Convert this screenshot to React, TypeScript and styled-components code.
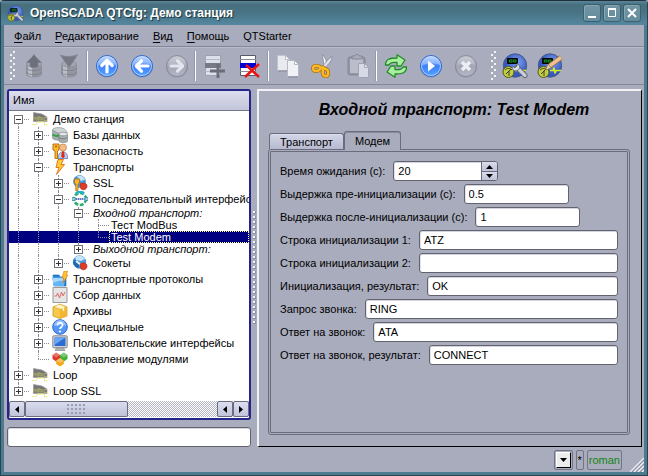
import React, { useState } from "react";
import styled, { createGlobalStyle, css } from "styled-components";

const color = {
  face: "#a9acbd",
  line: "#6b6c7d",
  navy: "#000080",
  frame: "#24248a",
};

const GlobalStyle = createGlobalStyle`
  * { box-sizing: border-box; }
  body { margin: 0; background: ${color.face}; }
  body, button, input { font-family: "Liberation Sans", Arial, sans-serif; font-size: 11px; color: #000; }
  button { margin: 0; padding: 0; border: 0; background: none; }
  input { margin: 0; min-width: 0; outline: none; }
  svg { display: block; flex: none; }
`;

const Window = styled.div`
  min-height: 100vh;
  display: flex;
  flex-direction: column;
  background: #4c7a8e;
  border: 1px solid #29434f;
  border-top-color: #1f2f3c;
  border-radius: 4px 4px 0 0;
  padding: 0 3px 3px;
`;

const TitleBar = styled.header`
  display: flex;
  align-items: center;
  height: 24px;
  margin: 0 -3px;
  padding: 0 6px;
  gap: 6px;
  background: linear-gradient(#5a8698, #48707f 15%, #487283 45%, #5488a0);
`;

const WindowTitle = styled.h1`
  flex: 1;
  margin: 0;
  font-size: 12px;
  line-height: 16px;
  font-weight: bold;
  color: #fff;
  text-shadow: 1px 1px 1px #16303c;
`;

const WindowButtons = styled.div`
  display: flex;
  gap: 2px;
`;

const WindowButton = styled.button`
  width: 18px;
  height: 18px;
  display: grid;
  place-items: center;
  border: 1px solid #3a6070;
  border-radius: 3px;
  background: linear-gradient(#7395a3, #648c9d);
  box-shadow: inset 1px 1px #86a6b2;
`;

const Body = styled.div`
  flex: 1;
  display: flex;
  flex-direction: column;
  background: ${color.face};
`;

const MenuBar = styled.nav`
  display: flex;
  align-items: center;
  gap: 14px;
  height: 22px;
  padding: 0 10px;
  border-bottom: 1px solid #858699;
`;

const MenuButton = styled.button`
  line-height: 16px;
  u { text-underline-offset: 2px; }
`;

const ToolBar = styled.div`
  display: flex;
  align-items: center;
  height: 38px;
  padding-left: 6px;
  border-top: 1px solid #b9bbca;
  border-bottom: 1px solid #858699;
`;

const Grip = styled.div<{ $spaced?: boolean }>`
  width: 6px;
  height: 30px;
  margin-left: ${(p) => (p.$spaced ? "8px" : "0")};
  background:
    conic-gradient(from 270deg at 2px 2px, #f4f4f8 25%, transparent 0) 0 3px / 6px 6px,
    conic-gradient(from 270deg at 2px 2px, #f4f4f8 25%, transparent 0) 3px 0 / 6px 6px;
`;

const ToolButton = styled.button`
  width: 35px;
  height: 34px;
  display: grid;
  place-items: center;
`;

const Separator = styled.div`
  width: 3px;
  height: 30px;
  border-right: 1px solid transparent;
  border-left: 1px solid #9698a9;
  background: #fff;
  background-clip: padding-box;
`;

const Workspace = styled.main`
  flex: 1;
  display: grid;
  grid-template-columns: minmax(0, 244fr) 6px minmax(0, 385fr);
  padding: 4px 2px 0 3px;
`;

const Navigator = styled.section`
  display: flex;
  flex-direction: column;
  gap: 7px;
`;

const TreeFrame = styled.div`
  flex: 1;
  display: flex;
  flex-direction: column;
  border: 2px solid ${color.frame};
  border-radius: 3px;
  background: #fff;
  overflow: hidden;
`;

const TreeHeader = styled.div`
  height: 20px;
  padding: 0 4px;
  line-height: 19px;
  background: linear-gradient(#dcdeee, #c3c5d9);
  border-bottom: 1px solid #77788a;
`;

const Tree = styled.div`
  flex: 1;
  overflow: hidden;
`;

const TreeRow = styled.div<{ $compact: boolean; $selected: boolean }>`
  display: flex;
  height: ${(p) => (p.$compact ? "12px" : "16px")};
  white-space: nowrap;
  background: ${(p) => (p.$selected ? color.navy : "transparent")};
  color: ${(p) => (p.$selected ? "#fff" : "#000")};
`;

type Guide = "pass" | "tee" | "end" | "first";

const guideSpan = {
  pass: "top: 0; bottom: 0;",
  tee: "top: 0; bottom: 0;",
  end: "top: 0; bottom: 50%;",
  first: "top: 50%; bottom: 0;",
};

const GuideCell = styled.span<{ $kind: Guide }>`
  position: relative;
  flex: none;
  width: 20px;
  display: flex;
  align-items: center;
  padding-left: 5px;
  &::before {
    content: "";
    position: absolute;
    left: 9px;
    border-left: 1px dotted #8a8a94;
    ${(p) => guideSpan[p.$kind]}
  }
  ${(p) =>
    p.$kind !== "pass" &&
    css`
      &::after {
        content: "";
        position: absolute;
        left: 9px;
        right: 0;
        top: 50%;
        border-top: 1px dotted #8a8a94;
      }
    `}
`;

const Expander = styled.button<{ $open: boolean }>`
  position: relative;
  z-index: 1;
  width: 9px;
  height: 9px;
  border: 1px solid #717178;
  background:
    linear-gradient(#333, #333) center / 5px 1px no-repeat,
    linear-gradient(#333, #333) center / 1px ${(p) => (p.$open ? "0px" : "5px")} no-repeat,
    #fff;
`;

const NodeIcon = styled.span`
  flex: none;
  width: 16px;
  margin: 0 3px;
`;

const NodeText = styled.span<{ $italic: boolean; $selected: boolean; $compact: boolean }>`
  flex: ${(p) => (p.$selected ? "1" : "none")};
  padding: 0 ${(p) => (p.$italic ? "4px" : "2px")};
  line-height: ${(p) => (p.$compact ? "12px" : "16px")};
  font-style: ${(p) => (p.$italic ? "italic" : "normal")};
  outline: ${(p) => (p.$selected ? "1px dotted #ffff80" : "none")};
  outline-offset: -1px;
`;

const ScrollBar = styled.div`
  display: flex;
  height: 16px;
  margin-bottom: 1px;
  background: repeating-conic-gradient(#b3b5c5 0 25%, #fff 0 50%) 0 0 / 2px 2px;
`;

const ScrollButton = styled.button`
  width: 16px;
  display: grid;
  place-items: center;
  border: 1px solid ${color.line};
  border-radius: 2px;
  background: linear-gradient(#dcdff0, #c2c5da);
`;

const ScrollThumb = styled.div`
  flex: 0 0 43%;
  display: grid;
  place-items: center;
  border: 1px solid ${color.line};
  border-radius: 2px;
  background: linear-gradient(#d9dcee, #bfc2d8);
  &::after {
    content: "";
    width: 20px;
    height: 12px;
    background: conic-gradient(from 270deg at 2px 2px, #9a9cb2 25%, transparent 0) 0 1px / 4px 4px;
  }
`;

const ScrollTrack = styled.div`
  flex: 1;
`;

const fieldBox = css`
  border: 1px solid #62636f;
  border-radius: 3px;
  background: #fff;
  box-shadow: inset 0 1px #d3d4dd, inset 1px 0 #e2e3ea;
`;

const TextField = styled.input<{ $short?: boolean }>`
  ${fieldBox}
  flex: ${(p) => (p.$short ? "0 0 105px" : "1")};
  height: 20px;
  padding: 0 4px;
`;

const FilterField = styled(TextField)`
  flex: none;
  width: 100%;
`;

const Splitter = styled.div`
  align-self: center;
  width: 4px;
  height: 114px;
  margin-left: 2px;
  background:
    conic-gradient(from 270deg at 2px 2px, #f6f6fa 25%, transparent 0) 0 0 / 5px 5px,
    conic-gradient(from 270deg at 3px 3px, #8e90a4 25%, transparent 0) 0 0 / 5px 5px;
`;

const Page = styled.section`
  display: flex;
  flex-direction: column;
  border: 1px solid #000;
  border-top: 2px solid #f1f1f6;
  border-left: 2px solid #f1f1f6;
  padding: 7px 11px 11px 9px;
`;

const PageTitle = styled.h2`
  margin: 0 0 9px;
  padding-left: 10px;
  text-align: center;
  font-size: 16px;
  line-height: 24px;
  font-style: italic;
  font-weight: bold;
`;

const TabList = styled.div`
  display: flex;
  align-items: flex-end;
  padding-left: 1px;
  height: 18px;
`;

const Tab = styled.button<{ $active: boolean }>`
  position: relative;
  height: ${(p) => (p.$active ? "19px" : "16px")};
  margin-bottom: ${(p) => (p.$active ? "-1px" : "0")};
  padding: 0 10px;
  border: 1px solid ${color.line};
  border-bottom: 0;
  border-radius: 3px 3px 0 0;
  background: ${(p) => (p.$active ? color.face : "linear-gradient(#d3d5e8, #b7b9cf)")};
  box-shadow: inset 0 1px ${(p) => (p.$active ? "#8a8b9b" : "#dcdeee")};
  white-space: nowrap;
`;

const TabPanel = styled.div`
  flex: 1;
  display: flex;
  flex-direction: column;
  gap: 3px;
  padding: 9px;
  border: 3px double ${color.line};
  border-radius: 3px;
`;

const FieldRow = styled.div`
  display: flex;
  align-items: center;
  gap: 8px;
  height: 20px;
`;

const FieldLabel = styled.label`
  flex: none;
  white-space: nowrap;
`;

const SpinBox = styled.div`
  ${fieldBox}
  display: flex;
  width: 105px;
  height: 20px;
  overflow: hidden;
`;

const SpinInput = styled.input`
  flex: 1;
  width: 0;
  padding: 0 4px;
  border: 0;
  background: transparent;
  appearance: textfield;
  &::-webkit-inner-spin-button { appearance: none; margin: 0; }
`;

const SpinButtons = styled.div`
  display: grid;
  grid-template-rows: 1fr 1fr;
  width: 16px;
  border-left: 1px solid ${color.line};
`;

const SpinButton = styled.button`
  display: grid;
  place-items: center;
  background: linear-gradient(#d9dcee, #bfc2d8);
  & + & { border-top: 1px solid ${color.line}; }
`;

const StatusBar = styled.footer`
  display: flex;
  justify-content: flex-end;
  align-items: center;
  gap: 3px;
  height: 25px;
`;

const StatusCell = styled.div`
  display: grid;
  place-items: center;
  min-width: 8px;
  height: 20px;
  padding: 0 1px;
  border: 1px solid #737485;
  border-radius: 2px;
`;

const UserName = styled.span`
  color: #128512;
  line-height: 16px;
`;

const HistoryButton = styled.button`
  width: 15px;
  height: 16px;
  display: grid;
  place-items: center;
  border: 1px solid #fff;
  border-right-color: #000;
  border-bottom-color: #000;
  background: #ececec;
`;

const SizeGrip = styled.div`
  align-self: flex-end;
  margin-left: 5px;
`;

/* ---------- icons ---------- */

const Arrow = ({ dir }: { dir: "up" | "down" | "left" | "right" }) => {
  const d = { up: "M0 4h7L3.500 0z", down: "M0 0h7L3.500 4z", left: "M4 0v7L0 3.500z", right: "M0 0v7l4-3.500z" }[dir];
  const vertical = dir === "up" || dir === "down";
  return (
    <svg width={vertical ? 7 : 4} height={vertical ? 4 : 7} viewBox={vertical ? "0 0 7 4" : "0 0 4 7"}>
      <path d={d} fill="#000" />
    </svg>
  );
};

const Orb = ({ grey, children }: { grey?: boolean; children: React.ReactNode }) => {
  const id = grey ? "orb-grey" : "orb-blue";
  return (
    <svg width="24" height="24" viewBox="0 0 24 24">
      <defs>
        <linearGradient id={id} x1="0" y1="0" x2="0" y2="1">
          <stop offset="0" stopColor={grey ? "#c3c5d0" : "#a6caff"} />
          <stop offset=".5" stopColor={grey ? "#a3a5b3" : "#3d82fb"} />
          <stop offset="1" stopColor={grey ? "#b5b7c4" : "#56a2ff"} />
        </linearGradient>
      </defs>
      <ellipse cx="12" cy="13" rx="11" ry="10.500" fill="#808295" opacity=".5" />
      <circle cx="12" cy="12" r="10.500" fill={`url(#${id})`} stroke={grey ? "#8b8d9d" : "#2d69cf"} />
      {!grey && <circle cx="12" cy="12" r="9.500" fill="none" stroke="#d3e4ff" opacity=".7" />}
      <path d="M3 11.500a9 9 0 0 1 18 0c-4-3-13-2-18 0z" fill="#fff" opacity={grey ? 0.15 : 0.3} />
      {children}
    </svg>
  );
};

const OrbArrow = ({ turn, grey }: { turn: number; grey?: boolean }) => (
  <Orb grey={grey}>
    <path
      d="M12 18V7.500M6.800 11.500 12 6.300l5.200 5.200"
      transform={`rotate(${turn} 12 12)`}
      fill="none"
      stroke={grey ? "#e3e5ee" : "#fff"}
      strokeWidth="3.200"
      strokeLinecap="round"
      strokeLinejoin="round"
    />
  </Orb>
);

const Storage = ({ save }: { save?: boolean }) => (
  <svg width="24" height="24" viewBox="0 0 24 24">
    <path d="M4.500 10v10c0 4 15 4 15 0V10z" fill="#94969f" stroke="#8b8d9a" strokeWidth=".8" />
    <path d="M6 11v10l4 2V11z" fill="#bcbec8" />
    <path d="M4.500 14c0 3.500 15 3.500 15 0M4.500 18c0 3.500 15 3.500 15 0" fill="none" stroke="#7c7e8c" strokeWidth=".8" />
    <ellipse cx="12" cy="10" rx="7.500" ry="3" fill="#a5a7b3" stroke="#8d8f9c" strokeWidth=".8" />
    {save ? (
      <path d="M3.500 1c4 2 13 2 17-.5L18 5l-6 8.500L6 5z" fill="#777985" stroke="#858794" strokeWidth=".8" />
    ) : (
      <path d="M12 .5c2 3 4 5 7.500 8H16v4c-2 1.500-6 1.500-8 0v-4H4.500C8 5.500 10 3.500 12 .5z" fill="#6d6f7b" stroke="#7f818e" strokeWidth=".8" />
    )}
  </svg>
);

const TableIcon = ({ remove }: { remove?: boolean }) => (
  <svg width="24" height="24" viewBox="0 0 24 24">
    <path d="M2.500 1.500h15v20h-15z" fill={remove ? "#fff" : "#dcdfec"} stroke={remove ? "#555a68" : "#9d9fad"} />
    <path d="M2 5.500h16M2 17.500h16" stroke={remove ? "#898a96" : "#b5b7c6"} />
    <path d="M2 9h16v5H2z" fill={remove ? "#0000d4" : "#777986"} />
    {remove ? (
      <path d="m8 11 13 12M21 10 7 23" stroke="#ee1111" strokeWidth="2.500" />
    ) : (
      <path d="M15 10v14M7 17h15" stroke="#6b6d79" strokeWidth="3" />
    )}
  </svg>
);

const CopyIcon = () => (
  <svg width="24" height="24" viewBox="0 0 24 24">
    <path d="M1.500 1.500h8l4 4v11h-12z" fill="#e9eaf0" stroke="#c0c2cd" />
    <path d="M9.500 1.500v4h4z" fill="#fff" stroke="#bdbfc9" />
    <path d="M11.500 6.500h7l4 4v12h-11z" fill="#f1f2f5" stroke="#b6b8c4" />
    <path d="M18.500 6.500v4h4z" fill="#fff" stroke="#b5b7c2" />
    <path d="M2 17h9M12 23h10" stroke="#85889a" />
  </svg>
);

const CutIcon = () => (
  <svg width="24" height="24" viewBox="0 0 24 24">
    <path d="M11.500.5c3 3 4.500 7 4 11.500l-2.500 2c0-5-1-9-1.500-13.500z" fill="#f6f7f9" stroke="#7c8090" strokeWidth=".7" />
    <path d="M21 2.500c0 4-3 7.500-7.500 11.500l-2-1.500C14.500 8.500 17 5 21 2.500z" fill="#dfe2e9" stroke="#7c8090" strokeWidth=".7" />
    <g fill="none" stroke="#a66b00" strokeWidth="3.800">
      <path d="M10 14c-2-3-8-3-8 .5S8 18 10 14l3-1" />
      <path d="M13 14c-2 3-2 7 1 8s4-3 2.500-6z" />
    </g>
    <g fill="none" stroke="#fbb828" strokeWidth="2.400">
      <path d="M10 14c-2-3-8-3-8 .5S8 18 10 14l3-1" />
      <path d="M13 14c-2 3-2 7 1 8s4-3 2.500-6z" />
    </g>
  </svg>
);

const PasteIcon = () => (
  <svg width="24" height="24" viewBox="0 0 24 24">
    <rect x="2" y="3" width="17" height="18" rx="2" fill="#9294a4" stroke="#868897" />
    <path d="M4 5h13v12L13 19H4z" fill="#bbbdca" />
    <path d="M6 5V2h3c0-2 4-2 4 0h3v3z" fill="#a9abba" stroke="#858797" />
    <path d="M12.500 9.500h6l4 4v10h-10z" fill="#d6d9e6" stroke="#a1a3b3" />
    <path d="M18.500 9.500v4h4z" fill="#e5e7f0" stroke="#a6a8b7" />
  </svg>
);

const RefreshIcon = () => (
  <svg width="24" height="24" viewBox="0 0 24 24">
    <g fill="#a9eda0" stroke="#218b26" strokeWidth="1.300" strokeLinejoin="round">
      <path d="M1.500 11C1.500 5 6 4 13 4V.8L21 6l-4 6h-4V8.500C9 8 6 8.500 5 11z" />
      <path d="M22.500 13c0 6-4.500 7-11.500 7v3.200L3 18l4-6h4v3.500c4 .5 7 0 8-2.500z" />
    </g>
  </svg>
);

const PlayIcon = () => (
  <Orb>
    <path d="M9 6.500v11l7-5.500z" fill="#fff" />
  </Orb>
);

const StopIcon = () => (
  <Orb grey>
    <path d="m8 8 8 8m0-8-8 8" stroke="#eceef5" strokeWidth="3.500" />
  </Orb>
);

const ScadaIcon = ({ tool, size = 26 }: { tool: "wrench" | "pencil"; size?: number }) => (
  <svg width={size} height={size} viewBox="0 0 26 26">
    <defs>
      <radialGradient id="globe" cx=".6" cy=".35">
        <stop offset="0" stopColor="#7d9ff2" />
        <stop offset="1" stopColor="#3359bc" />
      </radialGradient>
    </defs>
    <circle cx="13" cy="12.500" r="11.700" fill="url(#globe)" stroke="#46578b" />
    <path d="M5.500 5.500h10v5h-10z" fill="#071c0c" stroke="#000" />
    <path d="M7.500 7h2.500v2H7.500zm4 0H14v2h-2.500z" fill="none" stroke="#148a20" />
    <path d="M13 17.500h3l1-3 1 6 1-3h5" fill="none" stroke="#d6ec22" strokeWidth="1.500" />
    <circle cx="6.500" cy="19" r="5.500" fill="#c3cb4a" stroke="#535a18" />
    <path d="M3 17c2-2 5-2 7 0M4 21l5-5M7 18v5" fill="none" stroke="#394010" />
    {tool === "wrench" ? (
      <>
        <path d="m15 14.500 8 8" stroke="#4c5260" strokeWidth="5" strokeLinecap="round" />
        <path d="m15 14.500 8 8" stroke="#c9ccd4" strokeWidth="3.500" strokeLinecap="round" />
        <path d="M15 10.500c3.500 2 3.500 5.500 0 7-3 1-5.500-1-4.500-4l2.500 1.500 2-2z" fill="#dcdfe6" stroke="#5e6472" strokeWidth=".8" />
      </>
    ) : (
      <>
        <path d="m12.500 13 11.500-8.500" stroke="#95653b" strokeWidth="5" />
        <path d="m12.500 13 11.500-8.500" stroke="#efc18f" strokeWidth="3.500" />
        <path d="m8.500 17 2.500-6 3 4z" fill="#edcfa5" stroke="#82603d" strokeWidth=".5" />
      </>
    )}
  </svg>
);

type IconName =
  | "station" | "db" | "security" | "bolt" | "ssl" | "socket" | "serial" | "protocols"
  | "data" | "archive" | "special" | "ui" | "modules";

const treeArt: Record<IconName, React.ReactNode> = {
  station: (
    <>
      <path d="M1.500 1.500 10 3l5 3v4.500H1.500z" fill="#777774" stroke="#999" strokeWidth=".7" />
      <path d="M1 9.500 3 6l1.500 3.500M5 9.500V6h3m-1.500 0v3.500M8 9.500V6l2 2v1.500m0-3.500v3.500m5-3h-3v3h3" stroke="#b7b566" fill="none" strokeWidth=".8" />
      <path d="M0 13.500h4L5.500 11h7v3H16" stroke="#efe98a" fill="none" />
    </>
  ),
  db: (
    <>
      <path d="M.5 3v8c0 2.500 9 3 9 1V3" fill="#a5acad" stroke="#888f90" strokeWidth=".6" />
      <path d="M.5 3c0-3 11-3.500 13 0l2 3H6z" fill="#cfd4d4" stroke="#8a9192" strokeWidth=".6" />
      <path d="M.5 7.500c3 2 6 2 9-.5" stroke="#2fa446" strokeWidth="2" fill="none" />
      <path d="M7 7v7c0 2 8.500 2 8.500 0V7" fill="#a9b0b1" stroke="#737a7b" strokeWidth=".6" />
      <ellipse cx="11.200" cy="7" rx="4.200" ry="1.800" fill="#e4e7e7" stroke="#828989" strokeWidth=".6" />
      <path d="M7 10.500c2 1.800 6 1.800 8.500 0" stroke="#777f80" fill="none" />
    </>
  ),
  security: (
    <>
      <circle cx="11" cy="4.500" r="3.500" fill="#f3bd87" stroke="#c17a3d" strokeWidth=".7" />
      <path d="M6 15.500c0-9 10-9 9.700 0z" fill="#b5d0f7" stroke="#446fa9" strokeWidth=".7" />
      <path d="m10 8.500h2l.8 5-1.800 2-1.800-2z" fill="#e42b16" />
      <path d="M1 1h6v6L5.500 8v7.500H3V8L1 7z" fill="#fdb92c" stroke="#b0670b" strokeWidth=".9" />
      <circle cx="4" cy="3.500" r="1" fill="#a85d05" />
    </>
  ),
  bolt: <path d="M6 .5h5.500L9 5.500h3.500L4.500 15.500l2.500-7H4z" fill="#fdcb35" stroke="#e06c18" strokeWidth=".9" />,
  ssl: (
    <>
      <circle cx="7.500" cy="6.500" r="6" fill="#4d9bdc" stroke="#3577b6" strokeWidth=".6" />
      <path d="M5 1.500c3-2 7 0 8 3L9 6z" fill="#c6e5fa" />
      <path d="M2.500 4h5v4L6 9v6.500H3.800V9L2.500 8z" fill="#fdb92c" stroke="#b0670b" strokeWidth=".8" />
      <path d="M8 9c3-2 7-1 7 2s-3 5-6 3z" fill="#e33a24" stroke="#a31d11" strokeWidth=".6" />
    </>
  ),
  socket: (
    <>
      <circle cx="7.500" cy="7" r="6.300" fill="#4d9bdc" stroke="#3577b6" strokeWidth=".6" />
      <path d="M3 2.500c3-3 8-2 10 1.500L9 6 4 5z" fill="#c6e5fa" />
      <path d="M2 5c3 0 6 3 5 8-3 0-5-3-6-5z" fill="#1b6bb4" />
      <path d="m4 6 5 4" stroke="#eceff3" strokeWidth="2" />
      <path d="M8 9c3-2 7-1 7 2s-3 5-6 3z" fill="#e33a24" stroke="#a31d11" strokeWidth=".6" />
    </>
  ),
  serial: (
    <>
      <circle cx="8" cy="8" r="6" fill="#fff" stroke="#2fae72" strokeWidth="2.600" strokeDasharray="4 1.500" />
      <path d="M4 2.500A6 6 0 0 1 12 2.500" fill="none" stroke="#25b2c4" strokeWidth="2.600" />
      <path d="M0 6.500h3v3H0zm13 0h3v3h-3z" fill="#9fd6df" stroke="#3876a8" strokeWidth=".6" />
      <path d="M3.500 8h9" stroke="#2c4fa8" strokeWidth="1.600" strokeDasharray="1.500 .5" />
    </>
  ),
  protocols: (
    <>
      <path d="M1 4h6l1 2h6v9H2z" fill="#2681d5" stroke="#1a66b0" strokeWidth=".6" />
      <path d="M0 6.500h13l-1 8.500H2z" fill="#63b5f5" />
      <path d="M.5 7h11l-.5 3C7 9 4 11 1.500 12z" fill="#a8d8fc" />
      <path d="M12 0h4l-2 4h2l-5 8 1-5h-2z" fill="#fdc42a" stroke="#dc7517" strokeWidth=".6" />
    </>
  ),
  data: (
    <>
      <path d="M1 .5h14v15H1z" fill="#e5e5e6" stroke="#9a9a9f" />
      <path d="M2.500 9h2l1-3 2 5 2-6 1.500 4 2-4" fill="none" stroke="#e26a6c" />
    </>
  ),
  archive: (
    <>
      <path d="m1 4 7-2.500L15 4v9l-7 2.500L1 13z" fill="#f8c948" stroke="#c98b16" strokeWidth=".7" />
      <path d="m1 4 7 2.500L15 4 8 1z" fill="#fdebaa" stroke="#d39a28" strokeWidth=".6" />
      <path d="M8 6.500v9L15 13V4z" fill="#f3b62f" />
      <path d="m5 2.500 6.500 2.700V8" fill="none" stroke="#fff6d4" strokeWidth="1.500" />
    </>
  ),
  special: (
    <>
      <circle cx="8" cy="8" r="7.300" fill="#5598f8" stroke="#2f68cb" />
      <path d="M2 7a6 6 0 0 1 12 0C10 5 6 6 2 7z" fill="#96c1ff" />
      <path d="M5.500 6.500c0-4 5.500-3.500 5 0C10.300 8 8 8 8 10" fill="none" stroke="#fff" strokeWidth="1.700" />
      <circle cx="8" cy="12.500" r="1.100" fill="#fff" />
    </>
  ),
  ui: (
    <>
      <path d="M5 12h6l2 3.500H3z" fill="#b5b5b5" stroke="#808080" strokeWidth=".6" />
      <rect x=".8" y=".8" width="14.400" height="12" rx="1" fill="#cfd1d4" stroke="#83868a" />
      <path d="M2.500 2.500h11v8.500h-11z" fill="#2b6cd4" />
      <path d="M2.500 2.500h11l-11 7.500z" fill="#6aa5f3" />
    </>
  ),
  modules: (
    <>
      <path d="m.5 4 3.700-2.500L8 4v4l-3.800 2.500L.5 8z" fill="#e0362b" />
      <path d="m8 4 3.800-2.500L15.500 4v4l-3.700 2.500L8 8z" fill="#43b23a" />
      <path d="M4.200 9.500 8 7l3.800 2.500V13L8 15.500 4.200 13z" fill="#f2a719" />
      <path d="m.5 4 3.700-2.500L8 4 4.200 6.500zM8 4l3.800-2.500L15.500 4l-3.700 2.500zM4.200 9.500 8 7l3.800 2.500L8 12z" fill="#fff" opacity=".3" />
    </>
  ),
};

/* ---------- data ---------- */

interface Node {
  text: string;
  icon?: IconName;
  guides: Guide[];
  open?: boolean;
  italic?: boolean;
}

const nodes: Node[] = [
  { text: "Демо станция", icon: "station", guides: ["first"], open: true },
  { text: "Базы данных", icon: "db", guides: ["pass", "tee"], open: false },
  { text: "Безопасность", icon: "security", guides: ["pass", "tee"], open: false },
  { text: "Транспорты", icon: "bolt", guides: ["pass", "tee"], open: true },
  { text: "SSL", icon: "ssl", guides: ["pass", "pass", "tee"], open: false },
  { text: "Последовательный интерфейс", icon: "serial", guides: ["pass", "pass", "tee"], open: true },
  { text: "Входной транспорт:", guides: ["pass", "pass", "pass", "tee"], open: true, italic: true },
  { text: "Тест ModBus", guides: ["pass", "pass", "pass", "pass", "tee"] },
  { text: "Test Modem", guides: ["pass", "pass", "pass", "pass", "end"] },
  { text: "Выходной транспорт:", guides: ["pass", "pass", "pass", "end"], open: false, italic: true },
  { text: "Сокеты", icon: "socket", guides: ["pass", "pass", "end"], open: false },
  { text: "Транспортные протоколы", icon: "protocols", guides: ["pass", "tee"], open: false },
  { text: "Сбор данных", icon: "data", guides: ["pass", "tee"], open: false },
  { text: "Архивы", icon: "archive", guides: ["pass", "tee"], open: false },
  { text: "Специальные", icon: "special", guides: ["pass", "tee"], open: false },
  { text: "Пользовательские интерфейсы", icon: "ui", guides: ["pass", "tee"], open: false },
  { text: "Управление модулями", icon: "modules", guides: ["pass", "end"] },
  { text: "Loop", icon: "station", guides: ["tee"], open: false },
  { text: "Loop SSL", icon: "station", guides: ["end"], open: false },
];

const fields = [
  { id: "pre", label: "Выдержка пре-инициализации (с):", value: "0.5", short: true },
  { id: "post", label: "Выдержка после-инициализации (с):", value: "1", short: true },
  { id: "init1", label: "Строка инициализации 1:", value: "ATZ" },
  { id: "init2", label: "Строка инициализации 2:", value: "" },
  { id: "initResult", label: "Инициализация, результат:", value: "OK" },
  { id: "ring", label: "Запрос звонка:", value: "RING" },
  { id: "answer", label: "Ответ на звонок:", value: "ATA" },
  { id: "answerResult", label: "Ответ на звонок, результат:", value: "CONNECT" },
];

const menus = [
  ["Ф", "айл"],
  ["Р", "едактирование"],
  ["В", "ид"],
  ["П", "омощь"],
  ["", "QTStarter"],
];

const toolGroups: { label: string; icon: React.ReactNode }[][] = [
  [
    { label: "Загрузить", icon: <Storage /> },
    { label: "Сохранить", icon: <Storage save /> },
  ],
  [
    { label: "Вверх", icon: <OrbArrow turn={0} /> },
    { label: "Назад", icon: <OrbArrow turn={-90} /> },
    { label: "Вперёд", icon: <OrbArrow turn={90} grey /> },
  ],
  [
    { label: "Добавить", icon: <TableIcon /> },
    { label: "Удалить", icon: <TableIcon remove /> },
  ],
  [
    { label: "Копировать", icon: <CopyIcon /> },
    { label: "Вырезать", icon: <CutIcon /> },
    { label: "Вставить", icon: <PasteIcon /> },
  ],
  [
    { label: "Обновить", icon: <RefreshIcon /> },
    { label: "Запустить", icon: <PlayIcon /> },
    { label: "Остановить", icon: <StopIcon /> },
  ],
];

const tabs = ["Транспорт", "Модем"];

export default function App() {
  const [selected, setSelected] = useState("Test Modem");
  const [tab, setTab] = useState("Модем");
  const [wait, setWait] = useState(20);

  return (
    <>
      <GlobalStyle />
      <Window>
        <TitleBar>
          <ScadaIcon tool="wrench" size={17} />
          <WindowTitle>OpenSCADA QTCfg: Демо станция</WindowTitle>
          <WindowButtons>
            <WindowButton aria-label="Свернуть">
              <svg width="12" height="12"><path d="M2 9h8v2H2z" fill="#fff" /></svg>
            </WindowButton>
            <WindowButton aria-label="Развернуть">
              <svg width="12" height="12">
                <path d="M2.500 2.500h7v7h-7z" fill="none" stroke="#fff" />
                <path d="M2 2h8" stroke="#fff" strokeWidth="2" />
              </svg>
            </WindowButton>
            <WindowButton aria-label="Закрыть">
              <svg width="12" height="12"><path d="m2 2 8 8m0-8-8 8" stroke="#fff" strokeWidth="2" /></svg>
            </WindowButton>
          </WindowButtons>
        </TitleBar>

        <Body>
          <MenuBar>
            {menus.map(([key, rest]) => (
              <MenuButton key={rest}>{key && <u>{key}</u>}{rest}</MenuButton>
            ))}
          </MenuBar>

          <ToolBar role="toolbar">
            <Grip />
            {toolGroups.map((group, i) => (
              <React.Fragment key={group[0].label}>
                {i > 0 && <Separator />}
                {group.map((tool) => (
                  <ToolButton key={tool.label} aria-label={tool.label}>{tool.icon}</ToolButton>
                ))}
              </React.Fragment>
            ))}
            <Grip $spaced />
            <ToolButton aria-label="Конфигуратор"><ScadaIcon tool="wrench" /></ToolButton>
            <ToolButton aria-label="Разработка интерфейсов"><ScadaIcon tool="pencil" /></ToolButton>
          </ToolBar>

          <Workspace>
            <Navigator>
              <TreeFrame>
                <TreeHeader>Имя</TreeHeader>
                <Tree role="tree">
                  {nodes.map((node) => {
                    const isSelected = node.text === selected;
                    return (
                      <TreeRow
                        key={node.text}
                        role="treeitem"
                        aria-selected={isSelected}
                        $compact={!node.icon}
                        $selected={isSelected}
                        onClick={() => setSelected(node.text)}
                      >
                        {node.guides.map((kind, i) => (
                          <GuideCell key={i} $kind={kind}>
                            {i === node.guides.length - 1 && node.open !== undefined && (
                              <Expander $open={node.open} aria-label={node.text} />
                            )}
                          </GuideCell>
                        ))}
                        {node.icon && (
                          <NodeIcon>
                            <svg width="16" height="16" viewBox="0 0 16 16">{treeArt[node.icon]}</svg>
                          </NodeIcon>
                        )}
                        <NodeText $italic={!!node.italic} $selected={isSelected} $compact={!node.icon}>
                          {node.text}
                        </NodeText>
                      </TreeRow>
                    );
                  })}
                </Tree>
                <ScrollBar>
                  <ScrollButton aria-label="Влево"><Arrow dir="left" /></ScrollButton>
                  <ScrollThumb />
                  <ScrollTrack />
                  <ScrollButton aria-label="Влево"><Arrow dir="left" /></ScrollButton>
                  <ScrollButton aria-label="Вправо"><Arrow dir="right" /></ScrollButton>
                </ScrollBar>
              </TreeFrame>
              <FilterField aria-label="Поиск" />
            </Navigator>

            <Splitter />

            <Page>
              <PageTitle>Входной транспорт: Test Modem</PageTitle>
              <TabList role="tablist">
                {tabs.map((name) => (
                  <Tab key={name} role="tab" aria-selected={tab === name} $active={tab === name} onClick={() => setTab(name)}>
                    {name}
                  </Tab>
                ))}
              </TabList>
              <TabPanel role="tabpanel">
                <FieldRow>
                  <FieldLabel htmlFor="wait">Время ожидания (с):</FieldLabel>
                  <SpinBox>
                    <SpinInput id="wait" type="number" value={wait} onChange={(e) => setWait(Number(e.target.value))} />
                    <SpinButtons>
                      <SpinButton aria-label="Больше" onClick={() => setWait(wait + 1)}><Arrow dir="up" /></SpinButton>
                      <SpinButton aria-label="Меньше" onClick={() => setWait(wait - 1)}><Arrow dir="down" /></SpinButton>
                    </SpinButtons>
                  </SpinBox>
                </FieldRow>
                {fields.map((f) => (
                  <FieldRow key={f.id}>
                    <FieldLabel htmlFor={f.id}>{f.label}</FieldLabel>
                    <TextField id={f.id} defaultValue={f.value} $short={f.short} />
                  </FieldRow>
                ))}
              </TabPanel>
            </Page>
          </Workspace>

          <StatusBar>
            <StatusCell>
              <HistoryButton aria-label="Сообщения"><Arrow dir="down" /></HistoryButton>
            </StatusCell>
            <StatusCell>*</StatusCell>
            <StatusCell><UserName>roman</UserName></StatusCell>
            <SizeGrip>
              <svg width="14" height="14" viewBox="0 0 14 14">
                <path d="M0 14 14 0M4 14 14 4M8 14l6-6M12 14l2-2" stroke="#f4f4f8" strokeWidth="1.200" />
                <path d="M2 14 14 2M6 14l8-8M10 14l4-4" stroke="#85879a" strokeWidth=".8" />
              </svg>
            </SizeGrip>
          </StatusBar>
        </Body>
      </Window>
    </>
  );
}
